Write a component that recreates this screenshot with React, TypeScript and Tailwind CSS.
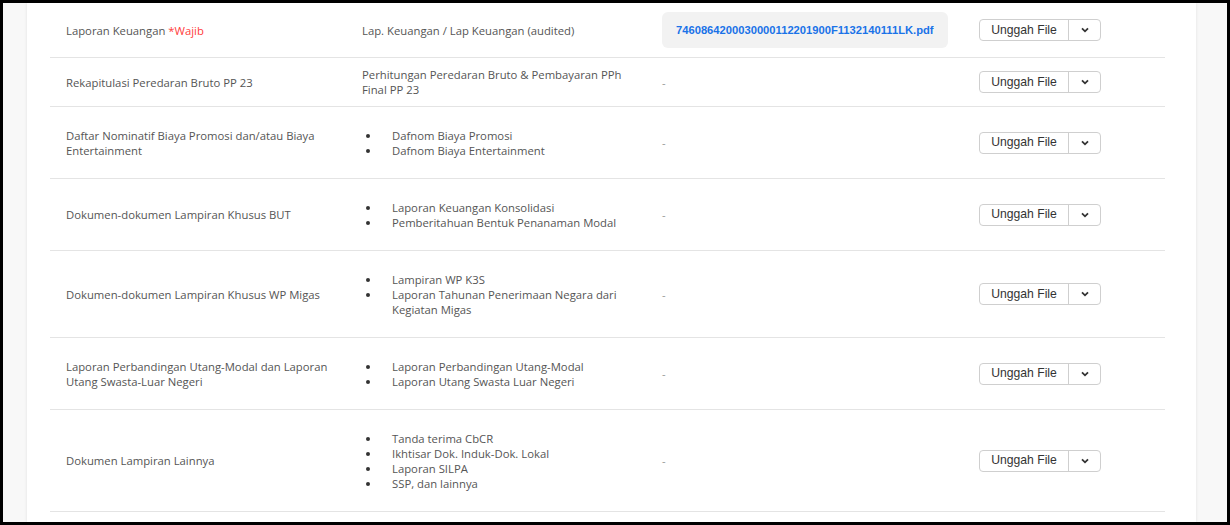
import React from "react";

type Row = {
  title: React.ReactNode;
  desc: React.ReactNode;
  file?: string;
};

const textFont = { fontFamily: '"Open Sans", "Noto Sans", sans-serif' };
const btnFont = { fontFamily: '"Liberation Sans", Arial, sans-serif' };

function Bullets({ items }: { items: string[] }) {
  return (
    <ul className="my-[11.5px]">
      {items.map((it) => (
        <li key={it} className="flex">
          <span className="w-[30px] shrink-0 flex items-start pt-[6px] pl-[4px]">
            <span className="block w-[4px] h-[4px] rounded-full bg-[#333]" />
          </span>
          <span>{it}</span>
        </li>
      ))}
    </ul>
  );
}

function UploadButton() {
  return (
    <div
      className="flex h-[22px] w-[122px] rounded-[4px] border border-[#cfcfcf] bg-white text-[12.2px] text-[#333]"
      style={btnFont}
    >
      <button className="flex-1 flex items-center justify-center border-r border-[#cfcfcf]">
        Unggah File
      </button>
      <button className="w-[31px] flex items-center justify-center">
        <svg width="8" height="6" viewBox="0 0 8 6">
          <path d="M1 1.3 L4 4.3 L7 1.3" fill="none" stroke="#333" strokeWidth="1.8" />
        </svg>
      </button>
    </div>
  );
}

const rows: Row[] = [
  {
    title: (
      <>
        Laporan Keuangan <span className="text-[#ff3b3b]">*Wajib</span>
      </>
    ),
    desc: "Lap. Keuangan / Lap Keuangan (audited)",
    file: "7460864200030000112201900F1132140111LK.pdf",
  },
  {
    title: "Rekapitulasi Peredaran Bruto PP 23",
    desc: "Perhitungan Peredaran Bruto & Pembayaran PPh Final PP 23",
  },
  {
    title: "Daftar Nominatif Biaya Promosi dan/atau Biaya Entertainment",
    desc: <Bullets items={["Dafnom Biaya Promosi", "Dafnom Biaya Entertainment"]} />,
  },
  {
    title: "Dokumen-dokumen Lampiran Khusus BUT",
    desc: (
      <Bullets items={["Laporan Keuangan Konsolidasi", "Pemberitahuan Bentuk Penanaman Modal"]} />
    ),
  },
  {
    title: "Dokumen-dokumen Lampiran Khusus WP Migas",
    desc: (
      <Bullets
        items={["Lampiran WP K3S", "Laporan Tahunan Penerimaan Negara dari Kegiatan Migas"]}
      />
    ),
  },
  {
    title: "Laporan Perbandingan Utang-Modal dan Laporan Utang Swasta-Luar Negeri",
    desc: (
      <Bullets items={["Laporan Perbandingan Utang-Modal", "Laporan Utang Swasta Luar Negeri"]} />
    ),
  },
  {
    title: "Dokumen Lampiran Lainnya",
    desc: (
      <Bullets
        items={[
          "Tanda terima CbCR",
          "Ikhtisar Dok. Induk-Dok. Lokal",
          "Laporan SILPA",
          "SSP, dan lainnya",
        ]}
      />
    ),
  },
];

export default function App() {
  return (
    <div className="w-[1230px] h-[525px] bg-black p-[3px]">
      <div className="h-full bg-[#f8f8f8] overflow-hidden flex">
        <div className="ml-[24px] w-[1169px] h-full bg-white shadow-[0_0_3px_rgba(0,0,0,0.1)] pl-[23px]">
          {/* Table of documents */}
          <div className="w-[1115px] text-[11.3px] leading-[15px] text-[#555]" style={textFont}>
            {rows.map((r, i) => (
              <div key={i} className="flex items-center py-[9px] border-b border-[#e4e4e4]">
                <div className="w-[296px] shrink-0 pl-4 pr-2">{r.title}</div>
                <div className="w-[300px] shrink-0 px-4">{r.desc}</div>
                <div className="w-[317px] shrink-0 px-4">
                  {r.file ? (
                    <div className="h-[36px] w-[286px] rounded-[6px] bg-[#f2f2f2] flex items-center px-[14px]">
                      <a
                        className="text-[11.2px] font-bold text-[#1a73e8] whitespace-nowrap"
                        style={btnFont}
                      >
                        {r.file}
                      </a>
                    </div>
                  ) : (
                    <span className="text-[#999]">-</span>
                  )}
                </div>
                <div className="px-4">
                  <UploadButton />
                </div>
              </div>
            ))}
          </div>
        </div>
      </div>
    </div>
  );
}
